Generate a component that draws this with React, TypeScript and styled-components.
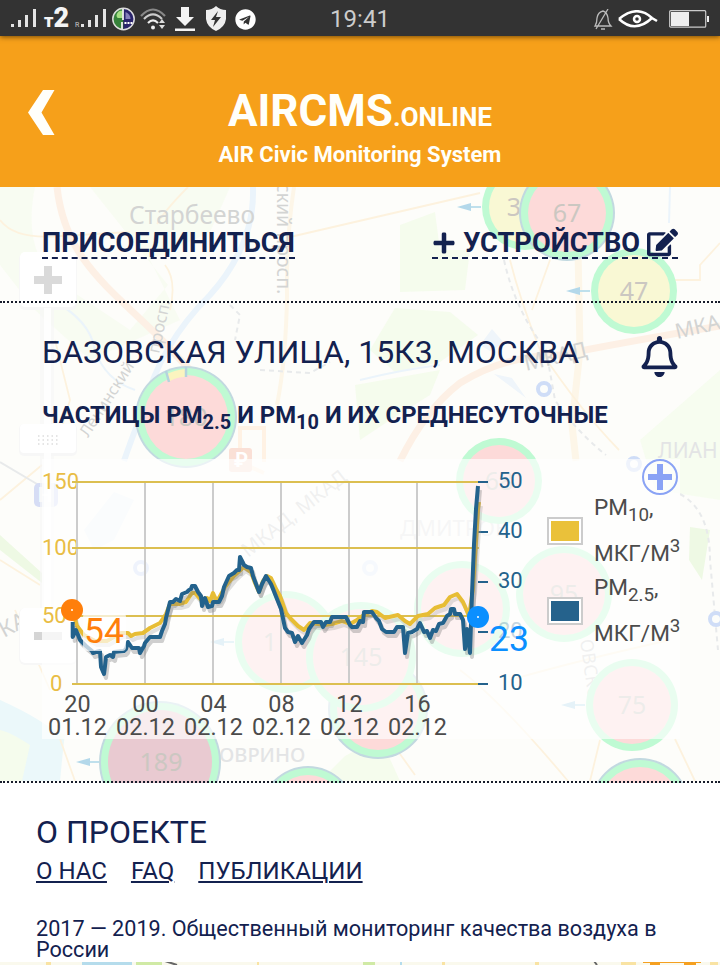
import React from 'react';
import styled, { createGlobalStyle } from 'styled-components';
import { FaPlus, FaEdit, FaRegBell, FaTelegram } from 'react-icons/fa';

type MarkerTone = 'red' | 'yellow' | 'dark';

interface MapMarker {
  x: number;
  y: number;
  r: number;
  label?: string;
  labelX?: number;
  tone: MarkerTone;
  ring?: boolean;
  arrow?: boolean;
}

const markers: MapMarker[] = [
  { x: 525, y: 207, r: 44, label: '3', labelX: 514, tone: 'yellow', arrow: true },
  { x: 567, y: 213, r: 47, label: '67', tone: 'red', ring: true },
  { x: 634, y: 291, r: 44, label: '47', tone: 'yellow', arrow: true },
  { x: 186, y: 417, r: 50, label: '180', tone: 'red', ring: true },
  { x: 499, y: 481, r: 44, label: '68', tone: 'red' },
  { x: 462, y: 609, r: 49, tone: 'red' },
  { x: 564, y: 594, r: 49, label: '95', tone: 'red' },
  { x: 378, y: 709, r: 49, tone: 'red', ring: true },
  { x: 286, y: 642, r: 52, label: '1', labelX: 270, tone: 'red', arrow: true },
  { x: 361, y: 657, r: 56, label: '145', tone: 'red' },
  { x: 632, y: 705, r: 47, label: '75', tone: 'red', arrow: true },
  { x: 160, y: 762, r: 60, label: '189', labelX: 161, tone: 'dark', ring: true, arrow: true },
  { x: 308, y: 814, r: 47, tone: 'red', ring: true },
  { x: 640, y: 808, r: 49, tone: 'red', ring: true },
];

const toneColors: Record<MarkerTone, string> = {
  red: '#fddad9',
  yellow: '#f9f8d4',
  dark: '#e9cad1',
};

// координаты линий внутри области графика
const pm25 =
  '30.7,163 30.7,178 34,171 38,181 44,187 50,192 51,194 54,193 58,192 59,208 62,215 63,207 64,198 68,196 71,198 72,193 82,192 84,190 86,183 90,189 97,189 98,194 102,187 103,184 108,178 118,178 120,172 123,165 124,159 128,143 131,143 134,140 138,142 140,135 145,133 147,131 149,130 150,127 153,127 156,133 159,137 160,147 163,139 166,148 170,147 171,143 177,143 178,141 180,137 182,128 187,117 192,114 195,111 197,111 198,98 202,106 205,108 209,109 211,117 214,125 217,133 220,125 224,117 229,125 233,135 239,150 243,169 246,173 250,174 253,183 256,177 260,184 265,176 267,170 272,163 279,163 281,168 284,163 288,163 290,158 304,158 308,166 310,168 315,168 318,162 321,163 322,153 330,153 334,159 337,162 340,170 344,173 352,173 355,168 361,168 363,194 366,174 370,173 375,170 378,164 382,173 385,172 388,179 391,171 394,172 397,165 401,164 405,157 408,155 409,150 412,150 413,155 418,155 421,161 423,190 425,170 428,194 430,135 432,85 434,50 436,27';

const pm10 =
  '32,157 35,167 42,176 53,182 65,182 79,174 86,174 89,177 93,175 101,174 108,169 118,164 124,155 128,145 137,145 144,143 150,134 153,134 160,142 165,139 168,142 171,134 174,141 177,139 183,128 192,117 202,108 209,113 213,124 217,133 221,122 225,117 229,119 234,130 238,137 244,154 249,160 256,167 262,171 268,164 276,165 283,166 290,165 300,162 308,165 315,161 322,156 330,152 335,153 343,159 356,156 363,162 368,165 376,157 386,155 393,149 402,146 408,138 415,135 421,143 427,157 431,130 436,50 437,43';

const xTicks = [
  { hour: '20', date: '01.12' },
  { hour: '00', date: '02.12' },
  { hour: '04', date: '02.12' },
  { hour: '08', date: '02.12' },
  { hour: '12', date: '02.12' },
  { hour: '16', date: '02.12' },
];

const leftTicks = [
  { value: 150, y: 23 },
  { value: 100, y: 89 },
  { value: 50, y: 157 },
  { value: 0, y: 225 },
];

const rightTicks = [
  { value: 50, y: 23 },
  { value: 40, y: 73 },
  { value: 30, y: 123 },
  { value: 20, y: 173 },
  { value: 10, y: 225 },
];

const Signal = () => (
  <svg width="26" height="20" viewBox="0 0 26 20" fill="#e4e4e4">
    <rect x="0" y="15" width="3" height="3" />
    <rect x="7" y="11" width="3" height="7" />
    <rect x="14" y="6" width="3" height="12" />
    <rect x="22" y="0" width="3" height="18" />
  </svg>
);

const StatusIcons = () => (
  <StatusLeft>
    <Signal />
    <Carrier>
      <small>т</small>2
    </Carrier>
    <Roaming>R</Roaming>
    <Signal />
    <svg width="23" height="24" viewBox="1.5 1 23 24">
      <path d="M13 2a11 11 0 0 0 0 22z" fill="#36823a" />
      <path d="M13 2a11 11 0 0 1 0 22z" fill="#29236b" />
      <path d="M6 9c1-4 4-5 6-4v7c-4 0-6 1-6-3z" fill="#a5df83" />
      <path d="M15 6q5 2 5 7h-5z" fill="#8580ba" />
      <path d="M12.5 3v11M11.5 16v7" stroke="#eee" strokeWidth="1.8" fill="none" />
      <circle cx="13" cy="13" r="10.7" fill="none" stroke="#ddd" strokeWidth="1.5" />
      <path d="M14 17h8" stroke="#fff" strokeWidth="2" strokeDasharray="2 1" />
    </svg>
    <svg width="28" height="26" viewBox="0 0 28 26" fill="none" strokeWidth="2.2">
      <path d="M1 10Q13-3 25 10" stroke="#888" />
      <path d="M4 13Q13 4 22 13" stroke="#ccc" />
      <path d="M8 17Q13 12 18 17" stroke="#eee" />
      <circle cx="13" cy="21.5" r="2" fill="#eee" />
      <path d="M19 17l3-4 3 4zM19 19l3 4 3-4z" fill="#ddd" />
    </svg>
    <svg width="27" height="26" viewBox="-2 0 27 26" fill="#f4f4f4">
      <path d="M6 1h8v10h5l-9 9-9-9h5zM0 22.5h20v2.5H0z" />
    </svg>
    <svg width="25" height="26" viewBox="0 0 25 26">
      <path d="M11 0Q15 4 21 4V13Q20 21 11 25Q2 21 1 13V4Q7 4 11 0z" fill="#eee" />
      <path d="M13 5L6 14h4l-2 7 8-10h-5z" fill="#333" />
    </svg>
    <FaTelegram size={21} color="#fff" />
  </StatusLeft>
);

const StatusRightIcons = () => (
  <StatusRight>
    <svg width="20" height="21" viewBox="0 0 20 21" fill="none" stroke="#bbb" strokeWidth="1.3">
      <path d="M2 17Q4 14 4 9Q5 3 10 2Q14 3 15 9Q15 14 18 17zM15 0L3 20M8 20h4" />
    </svg>
    <svg width="40" height="18" viewBox="0 0 40 18" fill="none" stroke="#fff" strokeWidth="2.5">
      <path d="M1 9Q19-6 34 8L39 11M1 9Q17 24 34 8" />
      <circle cx="19" cy="9" r="3" />
    </svg>
    <svg width="40" height="18" viewBox="0 0 40 18">
      <rect x="0.7" y="0.7" width="36" height="16.5" rx="1" fill="none" stroke="#ccc" strokeWidth="1.2" />
      <path d="M2 2h18v14H2zM38 6h2v6h-2z" fill="#eee" />
    </svg>
  </StatusRight>
);

const Marker = ({ marker }: { marker: MapMarker }) => (
  <g>
    {marker.arrow && (
      <g stroke="#bfe0ec" fill="#b3d8ea">
        <path
          d={`M${marker.x - marker.r} ${marker.y}h-18`}
          strokeWidth="2"
        />
        <path
          d={`M${marker.x - marker.r - 24} ${marker.y}l14-4v8z`}
          stroke="none"
        />
      </g>
    )}
    {marker.ring && (
      <circle cx={marker.x} cy={marker.y} r={marker.r + 1} fill="#c2d9e0" />
    )}
    <circle cx={marker.x} cy={marker.y} r={marker.r - 1} fill="#bffad3" />
    <circle
      cx={marker.x}
      cy={marker.y}
      r={marker.r - 8}
      fill={toneColors[marker.tone]}
    />
    <MarkerText x={marker.labelX ?? marker.x} y={marker.y + 9}>
      {marker.label}
    </MarkerText>
  </g>
);

const MapBackdrop = () => (
  <MapLayer viewBox="0 187 720 778" fill="none">
    <rect y="187" width="720" height="778" fill="#fdfdfa" />
    <g fill="#f5fced">
      <path d="M0 187H35Q20 260 70 290L130 330L168 285L90 187H230L210 232L150 260L180 320L90 360L35 310L0 265z" opacity=".6" />
      <path d="M400 225L435 212L440 250L470 250L465 290L400 292zM395 308L450 312L478 335L440 362L395 372L370 350zM355 385L440 370L430 395L390 420L360 440z" />
      <path d="M640 440L720 370V500L655 490z" opacity=".8" />
      <path d="M0 535L42 573V583L0 550zM690 527L710 530L702 580L689 560z" fill="#eef9e4" />
      <path d="M0 700L65 735L58 781H0zM345 756L380 737L400 781H320z" />
    </g>
    <g stroke="#ebf4fb" strokeWidth="6">
      <path d="M253 187Q255 245 210 295Q160 345 145 405Q131 440 124 461" />
      <path d="M52 300Q90 320 95 350Q105 380 135 390" strokeWidth="2" />
      <path d="M360 380Q400 370 440 365M670 187L669 223" strokeWidth="2" />
    </g>
    <path d="M480 345l12-16 12 14-14 8zM494 374l18 4 14 20zM84 530l30-38 20 8-20 40-20 10z" fill="#eff5fa" />
    <path d="M0 700Q45 720 64 740L60 781H22L30 745Q10 732 0 730z" fill="#ebf8fa" />
    <g stroke="#fdf0e5" strokeWidth="7">
      <path d="M57 187C65 260 110 288 160 338L190 370" />
      <path d="M400 461Q425 410 460 383Q505 355 560 355Q625 342 720 326" />
      <path d="M578 250L580 350L572 425L576 461M578 250L583 225" stroke="#fdf6e8" />
      <path d="M277 405Q286 360 287 295Q286 240 294 187" stroke="#fdf6e8" strokeWidth="4" />
      <path d="M240 450V428H264V462M237 461l27 12" stroke="#fff2e4" strokeWidth="4" />
    </g>
    <g stroke="#fdf2de" strokeWidth="1.8">
      <path d="M0 220Q15 240 60 236L130 232M290 237L480 193M188 187Q165 210 157 224M165 265Q177 280 170 310" />
      <path d="M510 260Q520 300 540 350Q580 410 619 450M532 310L550 260M650 280H700V265L720 243" />
      <path d="M0 500L42 465M15 610L50 690M60 739L75 781M460 670Q500 700 568 781M600 740L590 781M675 739L695 781M0 560L40 585" />
      <path d="M510 680Q580 660 670 640M55 340L70 400L55 450M390 740L415 775" />
    </g>
    <g stroke="#e8eaeb" strokeWidth="2" strokeDasharray="5 4">
      <path d="M504 260Q515 310 546 350L555 400Q575 430 606 455M230 305L240 315L235 340M260 370L310 373L330 362M680 494Q710 510 710 560L718 650" />
      <path d="M0 462L42 487" strokeDasharray="none" />
    </g>
    <MapLabel x="129" y="224" fontSize="24.6">Старбеево</MapLabel>
    <MapLabel fontSize="19.5" transform="translate(277 183) rotate(90)">ский просп.</MapLabel>
    <MapLabel fontSize="16" transform="translate(88 438) rotate(-57)">Ленинский</MapLabel>
    <MapLabel fontSize="17" transform="translate(159 354) rotate(-78)">просп.</MapLabel>
    <MapLabel fontSize="22" transform="translate(526 371) rotate(-13)">МКАД</MapLabel>
    <MapLabel fontSize="21" transform="translate(677 339) rotate(-13)">МКА</MapLabel>
    <MapLabel fontSize="20" transform="translate(248 558) rotate(-38)">МКАД, МКАД</MapLabel>
    <MapLabel fontSize="22" transform="translate(4 638) rotate(-28)">КА</MapLabel>
    <MapLabel fontSize="18" transform="translate(580 640) rotate(82)">ОВСКО</MapLabel>
    <MapLabel x="400" y="536" fontSize="22" $faint>ДМИТРОВ</MapLabel>
    <MapLabel x="658" y="458" fontSize="21" $faint>ЛИАН</MapLabel>
    <MapLabel x="219" y="762" fontSize="20" fontWeight="500" $faint>ОВРИНО</MapLabel>
    {markers.map((marker, index) => (
      <Marker key={index} marker={marker} />
    ))}
    <path d="M167 374Q175 370 185 369v8q-8 0-15 4z" fill="#fbf4bf" />
    <path d="M166 371l3 11M186 367v10" stroke="#b5d3de" strokeWidth="2.5" />
    <g stroke="#cfddf7" strokeWidth="4" fill="#fcfdfb">
      <circle cx="544" cy="389" r="6" />
      <circle cx="634" cy="464" r="6" />
      <circle cx="370" cy="568" r="6" opacity=".5" />
      <circle cx="141" cy="568" r="6" />
      <circle cx="716" cy="619" r="6" />
    </g>
    <rect x="229" y="448" width="23" height="24" rx="3" fill="#fae0d6" />
    <MapGlyph x="234" y="467">₽</MapGlyph>
    <rect x="34" y="483" width="24" height="24" rx="5" fill="#d6ddf5" />
    <MapGlyph x="38" y="502">Н</MapGlyph>
    <g fill="#f7f7f7">
      <rect x="40" y="308" width="14" height="300" opacity=".7" />
      <rect x="19" y="253" width="58" height="57" rx="6" />
      <rect x="19" y="424" width="58" height="32" rx="5" />
      <rect x="19" y="608" width="58" height="57" rx="6" />
    </g>
    <g fill="#fff">
      <rect x="44" y="308" width="7" height="300" opacity=".8" />
      <rect x="20" y="252" width="56" height="55" rx="5" />
      <rect x="20" y="424" width="56" height="29" rx="4" />
      <rect x="20" y="608" width="56" height="55" rx="5" />
    </g>
    <path d="M34 280h28M48 266v28" stroke="#dadada" strokeWidth="8" />
    <path d="M34 636h8" stroke="#d5d5d5" strokeWidth="8" />
    <path d="M42 636h20" stroke="#e0e0e0" strokeWidth="8" />
    <path d="M38 436h22M38 440h22M38 444h22" stroke="#ddd" strokeWidth="1.5" strokeDasharray="1.5 3" />
    {/* полоса карты под подвалом */}
    <rect y="961" width="720" height="4" fill="#faf9ed" />
    <path d="M82 963h50M400 963h2" stroke="#b5dcec" strokeWidth="4" />
    <path d="M136 963h26M363 963h12" stroke="#d0eaa5" strokeWidth="4" />
    <path d="M46 963h5M257 963h2M442 963h3M535 963h4M621 963h15M710 963h8" stroke="#f9e3a3" strokeWidth="4" />
    <path d="M643 961.5h58M650 964h10M684 964h12" stroke="#f5a020" strokeWidth="3" />
    <path d="M165 961l12 4M594 961l3 4" stroke="#666" strokeWidth="2" />
  </MapLayer>
);

const PmChart = () => (
  <ChartSvg width="500" height="280" viewBox="0 0 500 280" fill="none">
    {leftTicks.map((tick) => (
      <AxisText
        key={tick.value}
        x={tick.value ? 0 : 8}
        y={tick.y + 7}
        fill="#e9bd45"
      >
        {tick.value}
      </AxisText>
    ))}
    {xTicks.map((tick, index) => (
      <g key={index}>
        <path d={`M${35 + index * 68} 23V225`} stroke="#ccc" strokeWidth="2" />
        <AxisText x={35.5 + index * 68} y="253" fill="#4b4b4b" $large textAnchor="middle">
          {tick.hour}
        </AxisText>
        <AxisText x={35.5 + index * 68} y="276" fill="#4b4b4b" $large textAnchor="middle">
          {tick.date}
        </AxisText>
      </g>
    ))}
    {leftTicks.map((tick) => (
      <path key={tick.value} d={`M30 ${tick.y}H437`} stroke="#dcbf50" strokeWidth="2" />
    ))}
    {rightTicks.map((tick) => (
      <g key={tick.value}>
        <path d={`M436 ${tick.y}h10`} stroke="#24628c" strokeWidth="2" />
        <AxisText
          x="456"
          y={tick.y + 6}
          fill="#24628c"
          opacity={tick.value === 20 ? 0.25 : 1}
        >
          {tick.value}
        </AxisText>
      </g>
    ))}
    <g strokeWidth="4" strokeLinejoin="round">
      <polyline points={pm10} stroke="#9a9a9a" opacity=".3" transform="translate(2 4)" />
      <polyline points={pm10} stroke="#e7bd35" />
      <polyline points={pm25} stroke="#777" opacity=".35" transform="translate(2 4)" />
      <polyline points={pm25} stroke="#23628c" />
    </g>
    <rect x="41" y="154" width="43" height="38" rx="4" fill="#fff" opacity=".7" />
    <circle cx="30" cy="151" r="11" fill="#ff7f0b" />
    <circle cx="30" cy="151" r="1" fill="#fff" />
    <ValueText x="42" y="184" fill="#ff7f0b">54</ValueText>
    <circle cx="436" cy="158" r="11" fill="#0b8fff" />
    <circle cx="436" cy="158" r="1" fill="#fff" />
    <ValueText x="447" y="192" fill="#0b8fff">23</ValueText>
  </ChartSvg>
);

const App = () => {
  return (
    <Page>
      <GlobalStyle />
      <MapBackdrop />
      <StatusBar>
        <StatusIcons />
        <Clock>19:41</Clock>
        <StatusRightIcons />
      </StatusBar>
      <Header>
        <BackButton aria-label="Назад">
          <svg width="27" height="45" viewBox="0 0 27 45" fill="#fffffa">
            <path d="M15 0H26.5L13.5 22.5L26.5 45H15L0 22.5z" />
          </svg>
        </BackButton>
        <Brand>
          <BrandName>
            AIRCMS<span>.ONLINE</span>
          </BrandName>
          <BrandCaption>AIR Civic Monitoring System</BrandCaption>
        </Brand>
      </Header>
      <Navigation>
        <NavLink>Присоединиться</NavLink>
        <NavLink>
          <FaPlus size={24} />
          <span>Устройство</span>
          <FaEdit size={31} />
        </NavLink>
      </Navigation>
      <Station>
        <StationTop>
          <Address>Базовская улица, 15к3, Москва</Address>
          <FaRegBell size={41} />
        </StationTop>
        <ChartTitle>
          Частицы PM<sub>2.5</sub> и PM<sub>10</sub> и их среднесуточные
        </ChartTitle>
        <ChartPanel>
          <PmChart />
          <Legend>
            <ExpandButton aria-label="Увеличить">
              <svg width="24" height="26" viewBox="0 0 24 26">
                <path d="M9 0h6v10h9v6h-9v10H9V16H0v-6h9z" fill="#8aa3f5" />
              </svg>
            </ExpandButton>
            <LegendItem>
              <Swatch $color="#eac13a" />
              <LegendText>
                PM<sub>10</sub>,<br />
                мкг/м<sup>3</sup>
              </LegendText>
            </LegendItem>
            <LegendItem>
              <Swatch $color="#25628c" />
              <LegendText>
                PM<sub>2.5</sub>,<br />
                мкг/м<sup>3</sup>
              </LegendText>
            </LegendItem>
          </Legend>
        </ChartPanel>
      </Station>
      <Footer>
        <FooterTitle>О проекте</FooterTitle>
        <FooterLinks>
          <a>О нас</a>
          <a>FAQ</a>
          <a>Публикации</a>
        </FooterLinks>
        <Copyright>
          2017 — 2019. Общественный мониторинг качества воздуха в России
        </Copyright>
      </Footer>
    </Page>
  );
};

export default App;

const GlobalStyle = createGlobalStyle`
  body {
    margin: 0;
    overflow: hidden;
    font-family: Roboto, sans-serif;
    color: #13214f;
  }

  * {
    box-sizing: border-box;
  }

  svg {
    flex: none;
  }
`;

const Page = styled.div`
  position: relative;
  width: 720px;
  height: 965px;
  overflow: hidden;
  isolation: isolate;
`;

const MapLayer = styled.svg`
  position: absolute;
  z-index: -1;
  top: 187px;
  left: 0;
  width: 720px;
  height: 778px;
`;

const MapLabel = styled.text<{ $faint?: boolean }>`
  font-family: 'Noto Sans', sans-serif;
  fill: ${({ $faint }) => ($faint ? '#e3e4e5' : '#d3d4d3')};
`;

const MapGlyph = styled.text`
  font-size: 20px;
  font-weight: bold;
  fill: #fff;
`;

const MarkerText = styled.text`
  font-family: 'Noto Sans', sans-serif;
  font-size: 25px;
  fill: #cbc7c1;
  text-anchor: middle;
`;

const StatusBar = styled.div`
  position: relative;
  z-index: 1;
  display: grid;
  grid-template-columns: 1fr auto 1fr;
  align-items: center;
  height: 36px;
  padding: 0 11px;
  background: #333;
  box-shadow: 0 1px 5px rgba(80, 50, 0, 0.8);
`;

const StatusLeft = styled.div`
  display: flex;
  align-items: center;
  gap: 5px;
`;

const Carrier = styled.span`
  width: 24px;
  margin: 0 2px;
  color: #f4f4f4;
  font: 900 27px/26px Roboto, sans-serif;
  white-space: nowrap;

  small {
    font-size: 18px;
  }
`;

const Roaming = styled.span`
  width: 5px;
  margin: 12px -4px 0 0;
  color: #ccc;
  font-size: 7px;
`;

const Clock = styled.div`
  color: #ccc;
  font-size: 24px;
  line-height: 38px;
`;

const StatusRight = styled.div`
  display: flex;
  justify-content: flex-end;
  align-items: center;
  gap: 5px;

  svg:last-child {
    margin-left: 6px;
  }
`;

const Header = styled.header`
  display: grid;
  grid-template-columns: 60px 1fr 60px;
  height: 151px;
  padding-top: 50px;
  background: #f6a01a;
  color: #fffffa;
`;

const BackButton = styled.button`
  align-self: start;
  justify-self: start;
  padding: 4px 0 0 28px;
  border: 0;
  background: none;
`;

const Brand = styled.div`
  text-align: center;
`;

const BrandName = styled.div`
  font-size: 44px;
  font-weight: 700;
  line-height: 50px;

  span {
    font-size: 26.2px;
  }
`;

const BrandCaption = styled.div`
  font-size: 22px;
  font-weight: 700;
  line-height: 26px;
`;

const Navigation = styled.nav`
  display: flex;
  justify-content: space-between;
  align-items: flex-start;
  height: 116px;
  padding: 41px 42px 0;
  border-bottom: 2px dotted #171c2b;
`;

const NavLink = styled.a`
  display: flex;
  align-items: center;
  gap: 7px;
  height: 31px;
  border-bottom: 2px dashed #13214f;
  font-size: 27.2px;
  font-weight: 700;
  text-transform: uppercase;
`;

const Station = styled.main`
  height: 480px;
  padding: 29px 40px 0 42px;
  border-bottom: 2px dotted #171c2b;
`;

const StationTop = styled.div`
  display: flex;
  justify-content: space-between;
  align-items: center;
  height: 48px;
`;

const Address = styled.h1`
  margin: -8px 0 0;
  font-size: 32px;
  font-weight: 400;
  line-height: 40px;
  text-transform: uppercase;
  white-space: nowrap;
`;

const ChartTitle = styled.h2`
  margin: 19px 0 28px;
  font-size: 23.9px;
  font-weight: 700;
  line-height: 32px;
  text-transform: uppercase;
  white-space: nowrap;

  sub {
    font-size: 19.9px;
    line-height: 0;
  }
`;

const ChartPanel = styled.section`
  display: flex;
  height: 280px;
  background: rgba(255, 255, 255, 0.66);
`;

const ChartSvg = styled.svg`
  display: block;
`;

const AxisText = styled.text<{ $large?: boolean }>`
  font-size: ${({ $large }) => ($large ? '23.4px' : '22px')};
`;

const ValueText = styled.text`
  font-size: 35.5px;
`;

const Legend = styled.div`
  display: flex;
  flex: 1;
  flex-direction: column;
`;

const ExpandButton = styled.button`
  display: flex;
  align-items: center;
  align-self: flex-end;
  justify-content: center;
  width: 36px;
  height: 36px;
  margin: 0 2px -6px 0;
  padding: 0;
  border: 2px solid #8aa3f5;
  border-radius: 50%;
  background: transparent;
`;

const LegendItem = styled.div`
  display: flex;
  align-items: center;
  gap: 11px;
  height: 80px;
  padding-left: 5px;
`;

const Swatch = styled.div<{ $color: string }>`
  width: 36px;
  height: 28px;
  margin-top: 4px;
  border: 2px solid #ccc;
  box-shadow: inset 0 0 0 2px #fff;
  background: ${({ $color }) => $color};
`;

const LegendText = styled.div`
  margin-top: 3px;
  color: #4b4b4b;
  font-size: 22.6px;
  line-height: 46px;
  text-transform: uppercase;
  white-space: nowrap;

  sub,
  sup {
    font-size: 18.8px;
    line-height: 0;
  }
`;

const Footer = styled.footer`
  height: 179px;
  padding: 31px 36px 0;
  background: #fff;
`;

const FooterTitle = styled.h2`
  margin: 0;
  font-size: 32px;
  font-weight: 400;
  line-height: 36px;
  text-transform: uppercase;
`;

const FooterLinks = styled.div`
  display: flex;
  gap: 24px;
  margin-top: 5px;
  font-size: 24px;
  line-height: 32px;
  text-transform: uppercase;

  a {
    text-decoration: underline;
    text-decoration-thickness: 2px;
    text-underline-offset: 2px;
  }
`;

const Copyright = styled.p`
  margin: 31px 0 0;
  font-size: 21.6px;
  line-height: 21px;
`;
